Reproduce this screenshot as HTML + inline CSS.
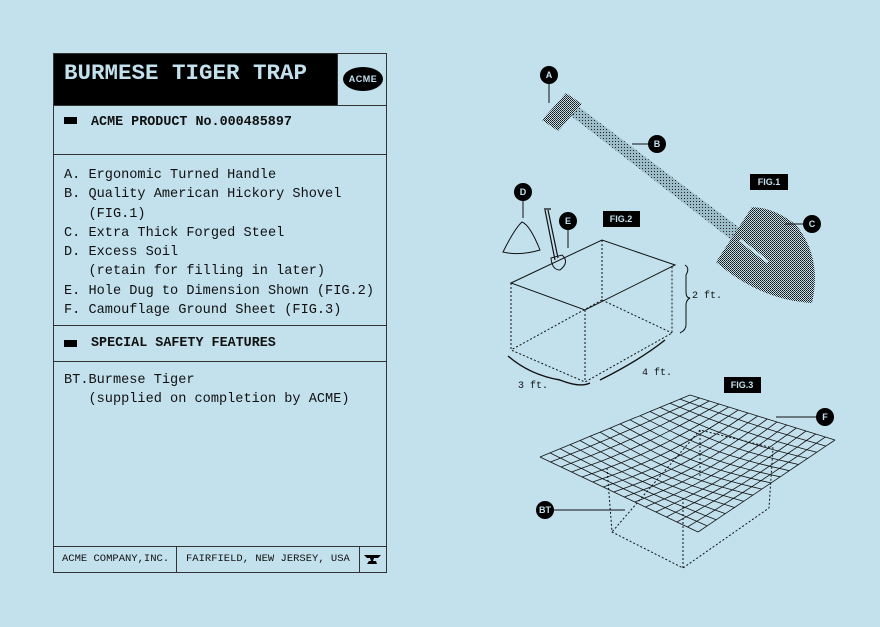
<!DOCTYPE html>
<html><head><meta charset="utf-8"><style>
body{margin:0;width:880px;height:627px;background:#c2e1ed;position:relative;overflow:hidden;font-family:"Liberation Mono",monospace;color:#111}
.p{position:absolute;left:53px;top:53px;width:332px;height:518px;border:1px solid #333;}
.hd{position:absolute;left:0;top:0;width:283px;height:51px;background:#000;color:#c2e1ed;font-family:"Liberation Mono",monospace;font-weight:bold;font-size:22.5px;line-height:38px;padding-left:10px;box-sizing:border-box}
.acme{position:absolute;left:283px;top:0;width:49px;height:51px;border-left:1px solid #333;box-sizing:border-box}
.acme span{position:absolute;left:5px;top:13px;width:40px;height:24px;background:#000;border-radius:50%;color:#c2e1ed;font-family:"Liberation Sans",sans-serif;font-weight:bold;font-size:9px;line-height:24px;text-align:center;letter-spacing:.5px}
.hl{position:absolute;left:0;width:332px;border-top:1px solid #333}
.t{position:absolute;font-size:13.6px;line-height:19.3px;white-space:pre}
.b{font-weight:bold;font-size:13.4px}
.sq{position:absolute;width:13px;height:7px;background:#000}
.vl{position:absolute;top:492px;height:26px;border-left:1px solid #333}
.f{position:absolute;top:499px;font-size:10.5px}
svg{position:absolute;left:0;top:0}
</style></head><body>
<div class="p">
<div class="hd">BURMESE TIGER TRAP</div>
<div class="acme"><span>ACME</span></div>
<div class="hl" style="top:51px"></div>
<div class="sq" style="left:10px;top:63px"></div>
<div class="t b" style="left:37px;top:59px">ACME PRODUCT No.000485897</div>
<div class="hl" style="top:100px"></div>
<div class="t" style="left:10px;top:112px">A. Ergonomic Turned Handle
B. Quality American Hickory Shovel
   (FIG.1)
C. Extra Thick Forged Steel
D. Excess Soil
   (retain for filling in later)
E. Hole Dug to Dimension Shown (FIG.2)
F. Camouflage Ground Sheet (FIG.3)</div>
<div class="hl" style="top:271px"></div>
<div class="sq" style="left:10px;top:286px"></div>
<div class="t b" style="left:37px;top:280px">SPECIAL SAFETY FEATURES</div>
<div class="hl" style="top:307px"></div>
<div class="t" style="left:10px;top:317px">BT.Burmese Tiger
   (supplied on completion by ACME)</div>
<div class="hl" style="top:492px"></div>
<div class="vl" style="left:122px"></div>
<div class="vl" style="left:305px"></div>
<div class="f" style="left:8px">ACME COMPANY,INC.</div>
<div class="f" style="left:132px">FAIRFIELD, NEW JERSEY, USA</div>
<svg style="left:310px;top:500px" width="18" height="12"><path d="M0 1H17L14 4H10L9 7H12L13 10H3L5 7H7L6 4H3Z" fill="#000"/></svg>
</div>
<svg width="880" height="627" id="s">
<defs><pattern id="dt" width="2" height="2" patternUnits="userSpaceOnUse"><rect width="2" height="2" fill="#c2e1ed"/><rect width="1" height="1" fill="#111"/><rect x="1" y="1" width="1" height="1" fill="#333"/></pattern>
<pattern id="dl" width="3" height="3" patternUnits="userSpaceOnUse"><rect width="3" height="3" fill="#9cbcc8"/><rect width="1" height="1" fill="#222"/></pattern></defs>
<g font-family="Liberation Sans,sans-serif" font-weight="bold" font-size="9" fill="#c2e1ed" text-anchor="middle">
<path d="M566 112L575 104L769 250L760 262Z" fill="url(#dl)"/>
<path d="M752 207L716 262Q760 300 812 303Q822 258 797 226Q776 208 752 207Z" fill="url(#dt)"/>
<path d="M740 240L768 262" stroke="#c2e1ed" stroke-width="3"/>
<path d="M542 120L566 93L582 104L558 131Z" fill="url(#dt)"/>
<g stroke="#111" stroke-width="1">
<line x1="549" y1="84" x2="549" y2="103"/><line x1="632" y1="144" x2="649" y2="144"/><line x1="785" y1="224" x2="804" y2="224"/>
<line x1="523" y1="200" x2="523" y2="218"/><line x1="568" y1="228" x2="568" y2="248"/><line x1="776" y1="417" x2="817" y2="417"/><line x1="553" y1="510" x2="625" y2="510"/>
</g>
<circle cx="549" cy="75" r="9" fill="#000"/><text x="549" y="78">A</text>
<circle cx="657" cy="144" r="9" fill="#000"/><text x="657" y="147">B</text>
<circle cx="812" cy="224" r="9" fill="#000"/><text x="812" y="227">C</text>
<circle cx="523" cy="192" r="9" fill="#000"/><text x="523" y="195">D</text>
<circle cx="568" cy="221" r="9" fill="#000"/><text x="568" y="224">E</text>
<circle cx="825" cy="417" r="9" fill="#000"/><text x="825" y="420">F</text>
<circle cx="545" cy="510" r="9" fill="#000"/><text x="545" y="513">BT</text>
<rect x="750" y="174" width="38" height="16" fill="#000"/><text x="769" y="185">FIG.1</text>
<rect x="603" y="211" width="37" height="16" fill="#000"/><text x="621" y="222">FIG.2</text>
<rect x="724" y="377" width="37" height="16" fill="#000"/><text x="742" y="388">FIG.3</text>
</g>
<g fill="none" stroke="#111" stroke-width="1">
<path d="M503 252Q515 228 522 222Q530 225 540 250Q520 256 503 252Z"/>
<path d="M545 210L555 260M548 210L558 258M544 209H551" stroke-width="1.2"/>
<path d="M551 258Q552 270 560 270Q570 262 562 255Z"/>
<path d="M511 283L602 240L675 265L585 310Z"/>
<path d="M511 283V350L585 382L672 333V265M585 310V382M602 240V300L511 350M602 300L672 333" stroke-dasharray="2 2"/>
<path d="M685 265Q690 268 686 275V292Q686 298 690 298Q686 300 686 305V325Q686 330 680 333"/>
<path d="M508 356Q530 375 560 380Q580 388 590 383M600 380Q640 360 665 340" stroke-width="1.4"/>
<path d="M607 468L612 532L683 568L769 508L773 448L700 430L612 532M683 568V498M700 430V478" stroke-dasharray="2 2"/>
</g>
<g font-family="Liberation Mono,monospace" font-size="10" fill="#111">
<text x="692" y="298">2 ft.</text><text x="642" y="375">4 ft.</text><text x="518" y="388">3 ft.</text>
</g>
<g id="grid" fill="none" stroke="#111" stroke-width="0.8"></g>
</svg>
<script>
var A=[540,457],B=[690,395],C=[835,440],D=[698,532],N=15,g='';
function P(u,v){var x=(1-u)*(1-v)*A[0]+u*(1-v)*B[0]+u*v*C[0]+(1-u)*v*D[0];var y=(1-u)*(1-v)*A[1]+u*(1-v)*B[1]+u*v*C[1]+(1-u)*v*D[1]+Math.sin(Math.PI*u)*Math.sin(Math.PI*v)*8;return x.toFixed(1)+' '+y.toFixed(1);}
for(var i=0;i<=N;i++){var a='M',b='M';for(var j=0;j<=N;j++){a+=(j?'L':'')+P(i/N,j/N);b+=(j?'L':'')+P(j/N,i/N);}g+='<path d="'+a+'"/><path d="'+b+'"/>';}
document.getElementById('grid').innerHTML=g;
</script>
</body></html>
